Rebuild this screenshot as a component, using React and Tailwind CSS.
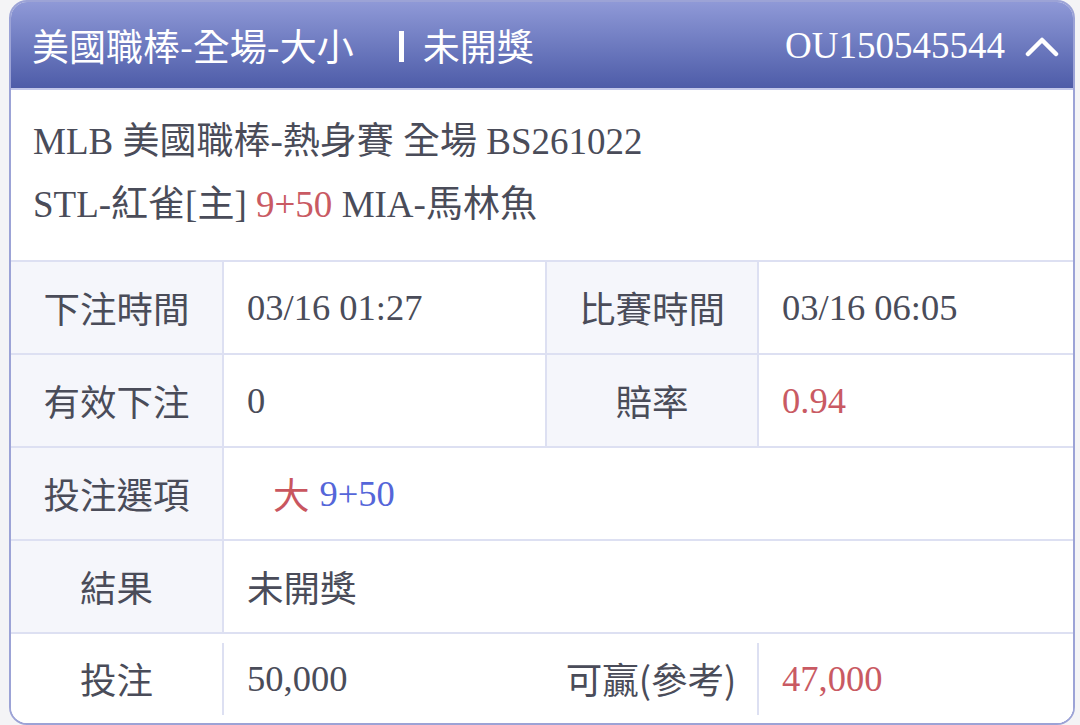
import React from "react";

const serif = { fontFamily: '"Liberation Serif", "Noto Sans CJK TC", serif' };
const sans = { fontFamily: '"Noto Sans CJK TC", "Noto Sans", sans-serif' };

function Label({ children, bg = true, className = "" }) {
  return (
    <div
      className={`flex items-center justify-center text-[36.5px] leading-[40px] text-[#4a4c59] ${bg ? "bg-[#f5f6fb]" : ""} ${className}`}
      style={sans}
    >
      {children}
    </div>
  );
}

function Value({ children, className = "", pl = "pl-[23px]" }) {
  return (
    <div
      className={`flex items-center ${pl} text-[36.5px] leading-[40px] text-[#4a4c59] bg-white ${className}`}
      style={serif}
    >
      {children}
    </div>
  );
}

export default function App() {
  return (
    <div className="w-[1080px] h-[725px] bg-[#f4f4f6] pl-[9px] pr-[5px] overflow-hidden">
      <div className="h-[725px] border-2 border-[#9ca3d6] rounded-[18px] overflow-hidden bg-white flex flex-col">
        {/* Header */}
        <div className="h-[86px] shrink-0 flex items-center justify-between pl-[21px] pr-[14px] bg-gradient-to-b from-[#8f99d7] to-[#4e5ca8] text-white">
          <div className="flex items-center text-[37px] leading-[40px]" style={sans}>
            <span>美國職棒-全場-大小</span>
            <span className="inline-block w-[5px] h-[31px] bg-white ml-[45px] mr-[19px] mt-[2px]"></span>
            <span>未開獎</span>
          </div>
          <div className="flex items-center">
            <span className="text-[37px] leading-[40px] mt-[2px]" style={serif}>OU150545544</span>
            <svg width="34" height="22" viewBox="0 0 34 22" className="ml-[20px] mt-[2px]">
              <polyline points="3,19 17,5 31,19" fill="none" stroke="white" strokeWidth="4.5" strokeLinecap="round" strokeLinejoin="round" />
            </svg>
          </div>
        </div>
        <div className="h-[2px] shrink-0 bg-[#c3c8ea]"></div>

        {/* Info */}
        <div className="h-[170px] shrink-0 pt-[20px] pb-[24px] pl-[22px] text-[#4a4c59] text-[37px] leading-[63px]" style={serif}>
          <div className="whitespace-nowrap">MLB 美國職棒-熱身賽 全場 BS261022</div>
          <div className="whitespace-nowrap">
            STL-紅雀[主] <span className="text-[#c95a63]">9+50</span> MIA-馬林魚
          </div>
        </div>

        {/* Table */}
        <div className="flex-1 flex flex-col">
          <div className="h-[93px] shrink-0 flex border-t-2 border-[#dde0f2]">
            <Label className="w-[211px]">下注時間</Label>
            <Value className="w-[323px] border-l-2 border-[#dde0f2]">03/16 01:27</Value>
            <Label className="w-[212px] border-l-2 border-[#dde0f2]">比賽時間</Label>
            <Value className="flex-1 border-l-2 border-[#dde0f2]">03/16 06:05</Value>
          </div>
          <div className="h-[93px] shrink-0 flex border-t-2 border-[#dde0f2]">
            <Label className="w-[211px]">有效下注</Label>
            <Value className="w-[323px] border-l-2 border-[#dde0f2]">0</Value>
            <Label className="w-[212px] border-l-2 border-[#dde0f2]">賠率</Label>
            <Value className="flex-1 border-l-2 border-[#dde0f2]"><span className="text-[#c95a63]">0.94</span></Value>
          </div>
          <div className="h-[93px] shrink-0 flex border-t-2 border-[#dde0f2]">
            <Label className="w-[211px]">投注選項</Label>
            <Value pl="pl-[49px]" className="flex-1 border-l-2 border-[#dde0f2]">
              <span className="text-[#c9565f]" style={sans}>大</span>
              <span className="text-[#5566d9] ml-[10px]">9+50</span>
            </Value>
          </div>
          <div className="h-[93px] shrink-0 flex border-t-2 border-[#dde0f2]">
            <Label className="w-[211px]">結果</Label>
            <Value className="flex-1 border-l-2 border-[#dde0f2]"><span style={sans}>未開獎</span></Value>
          </div>
          <div className="flex-1 flex items-center border-t-2 border-[#dde0f2] bg-white">
            <Label bg={false} className="w-[211px] h-full">投注</Label>
            <div className="w-[2px] h-[72px] bg-[#dde0f2]"></div>
            <Value className="w-[321px] h-full">50,000</Value>
            <Label bg={false} className="w-[212px] h-full">可贏(參考)</Label>
            <div className="w-[2px] h-[72px] bg-[#dde0f2]"></div>
            <Value className="flex-1 h-full"><span className="text-[#c95a63]">47,000</span></Value>
          </div>
        </div>
      </div>
    </div>
  );
}
